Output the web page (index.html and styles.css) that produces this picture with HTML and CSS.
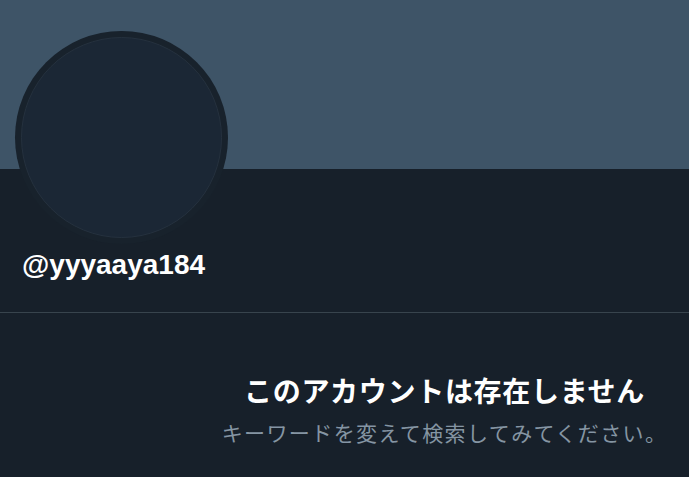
FILE: index.html
```html
<!DOCTYPE html>
<html lang="ja">
<head>
<meta charset="utf-8">
<link rel="stylesheet" href="styles.css">
</head>
<body>
<div class="page">
  <div class="banner"></div>
  <div class="profile">
    <div class="avatar"><div class="avatar-inner"></div></div>
    <div class="handle">@yyyaaya184</div>
  </div>
  <div class="divider"></div>
  <div class="empty">
    <div class="empty-title">このアカウントは存在しません</div>
    <div class="empty-sub">キーワードを変えて検索してみてください。</div>
  </div>
</div>
</body>
</html>
```
FILE: styles.css
```css
html, body {
  margin: 0;
  padding: 0;
  background: #17202a;
}
.page {
  width: 689px;
  height: 477px;
  overflow: hidden;
  background: #17202a;
}
.banner {
  height: 169px;
  background: #3e5467;
}
.profile {
  display: flex;
  flex-direction: column;
  align-items: flex-start;
  padding-left: 15px;
  height: 143px;
  box-sizing: border-box;
}
.avatar {
  width: 213px;
  height: 213px;
  margin-top: -138px;
  border-radius: 50%;
  background: #18222c;
  padding: 6px;
  box-sizing: border-box;
}
.avatar-inner {
  width: 100%;
  height: 100%;
  border-radius: 50%;
  background: #1b2735;
  border: 1px solid #25313e;
  box-sizing: border-box;
}
.handle {
  margin-top: 3px;
  margin-left: 7px;
  font-family: "Liberation Sans", Arial, sans-serif;
  font-weight: bold;
  font-size: 28px;
  line-height: 36px;
  color: #ffffff;
}
.divider {
  height: 1px;
  background: #38444d;
}
.empty {
  padding-left: 200px;
  padding-top: 57px;
  text-align: center;
  font-family: "Noto Sans CJK JP", sans-serif;
}
.empty-title {
  font-size: 28px;
  font-weight: bold;
  line-height: 40px;
  color: #ffffff;
  letter-spacing: 0.7px;
}
.empty-sub {
  margin-top: 7px;
  font-size: 21px;
  line-height: 30px;
  color: #8595a3;
  letter-spacing: 1.4px;
}
```
